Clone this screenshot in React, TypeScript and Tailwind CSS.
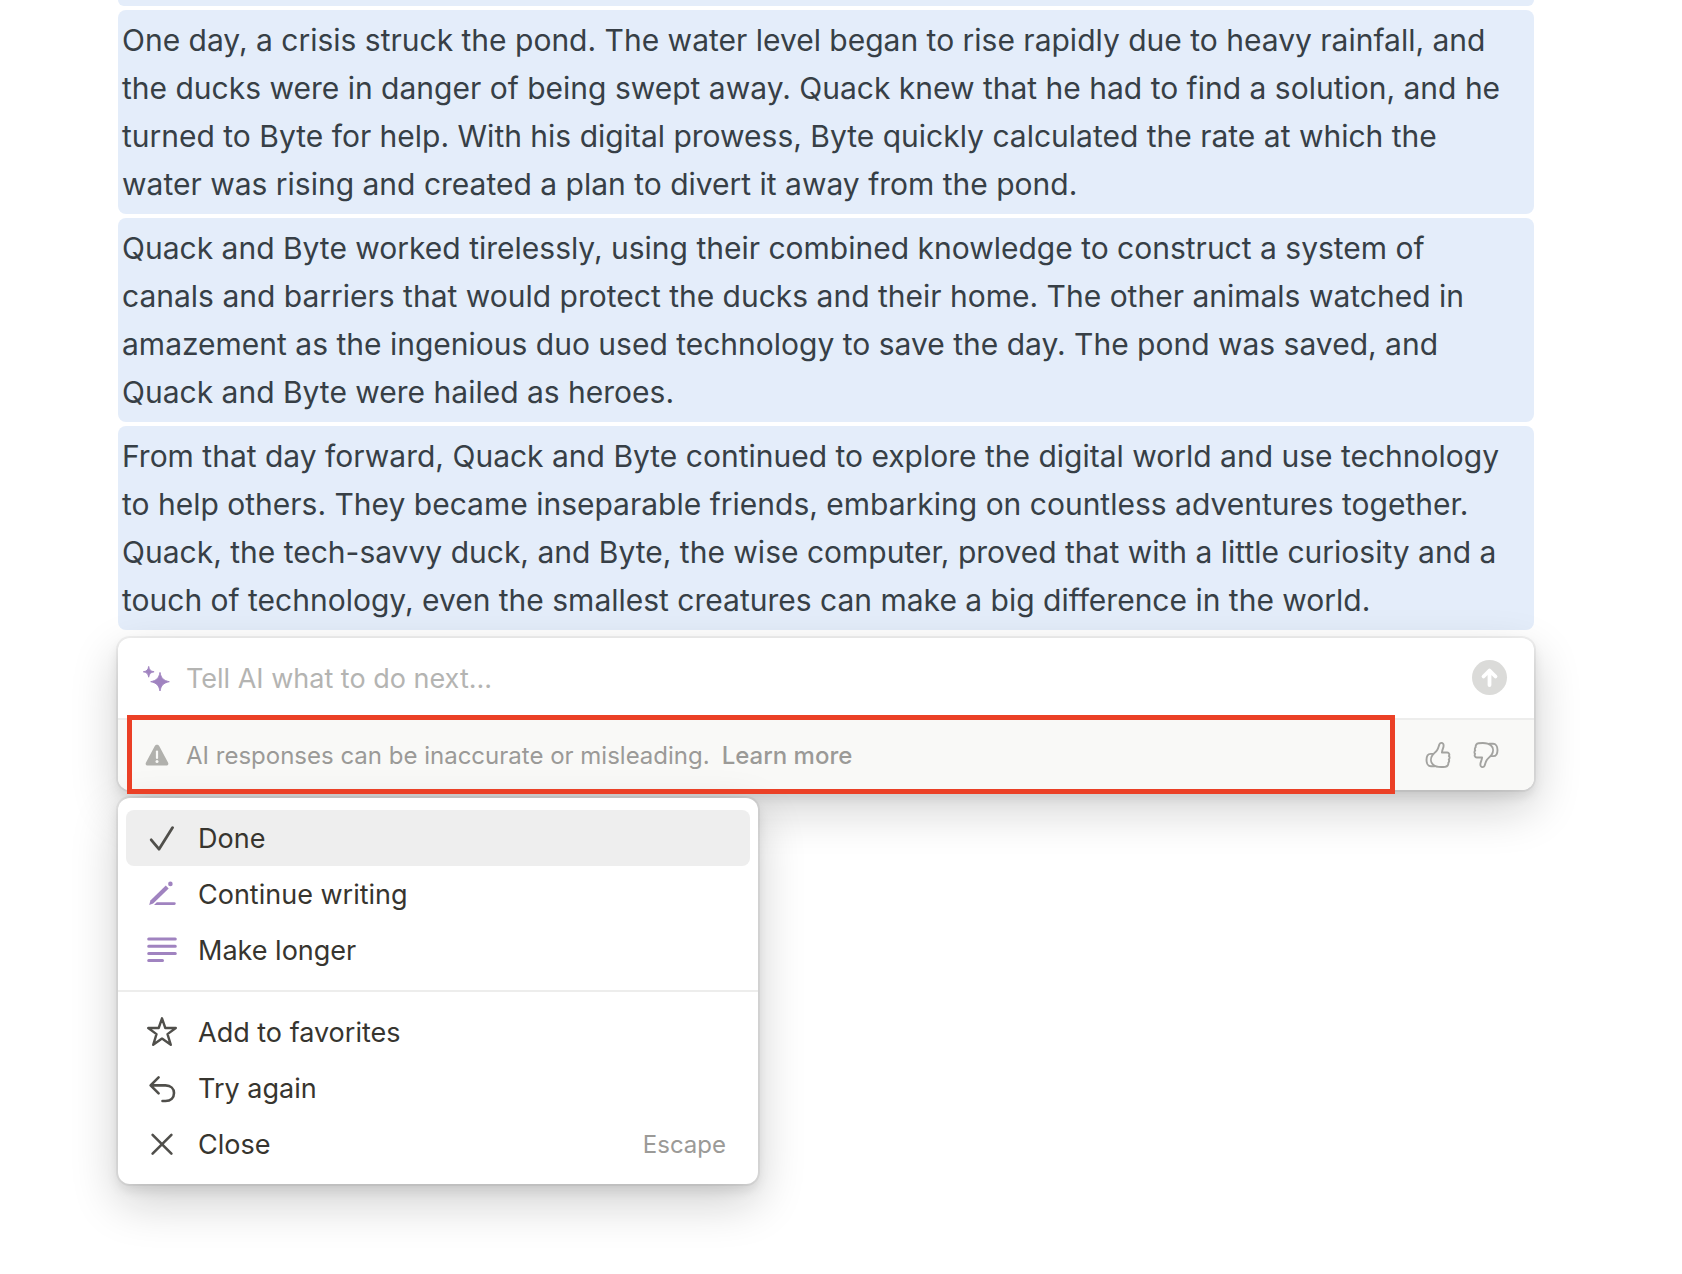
import type { ReactNode } from 'react';

const paragraphs = [
  'One day, a crisis struck the pond. The water level began to rise rapidly due to heavy rainfall, and the ducks were in danger of being swept away. Quack knew that he had to find a solution, and he turned to Byte for help. With his digital prowess, Byte quickly calculated the rate at which the\nwater was rising and created a plan to divert it away from the pond.',
  'Quack and Byte worked tirelessly, using their combined knowledge to construct a system of\ncanals and barriers that would protect the ducks and their home. The other animals watched in amazement as the ingenious duo used technology to save the day. The pond was saved, and Quack and Byte were hailed as heroes.',
  'From that day forward, Quack and Byte continued to explore the digital world and use technology to help others. They became inseparable friends, embarking on countless adventures together. Quack, the tech-savvy duck, and Byte, the wise computer, proved that with a little curiosity and a touch of technology, even the smallest creatures can make a big difference in the world.',
];

const Sparkles = () => (
  <svg
    viewBox="0 0 28 28"
    className="size-7 shrink-0 fill-[#a083c0] stroke-[#a083c0]"
    strokeWidth="0.900"
    strokeLinejoin="round"
    aria-hidden="true"
  >
    <path d="M6.700 2.400C7.400 6 8.500 7.100 12.100 7.800C8.500 8.500 7.400 9.600 6.700 13.200C6 9.600 4.900 8.500 1.300 7.800C4.900 7.100 6 6 6.700 2.400Z" />
    <path d="M18 8.400C19.200 14.100 21.200 16.300 27.300 17.700C21.200 19.100 19.200 21.300 18 27C16.800 21.300 14.800 19.100 8.700 17.700C14.800 16.300 16.800 14.100 18 8.400Z" />
  </svg>
);

const Warning = () => (
  <svg viewBox="0 0 28 28" className="size-7 shrink-0" aria-hidden="true">
    <path d="M14 3.800c1 0 1.700.5 2.200 1.300l8.800 16.300c.9 1.700.1 3.200-1.700 3.200H4.700c-1.800 0-2.600-1.500-1.700-3.200l8.800-16.300c.5-.8 1.200-1.300 2.200-1.300z" fill="#b1b1ad" />
    <path d="M14 10.500v6.500" stroke="#f9f9f7" strokeWidth="2.200" strokeLinecap="round" />
    <circle cx="14" cy="20.600" r="1.500" fill="#f9f9f7" />
  </svg>
);

const Thumb = ({ down = false }: { down?: boolean }) => (
  <svg
    viewBox="0 0 28 28"
    className={down ? 'size-7 rotate-180' : 'size-7'}
    fill="none"
    stroke="#a3a3a0"
    strokeWidth="1.900"
    strokeLinecap="round"
    strokeLinejoin="round"
    aria-hidden="true"
  >
    <path d="M8.200 14.600C9.300 12.700 11.700 11.200 13.200 8.900C14.600 6.800 14.800 4.700 15.500 3.200C16.300 1.500 18.200 1.500 19.100 2.700C20 4 19.600 5.900 18.900 7.700C18.400 9 18 10.200 17.900 11.500H23.300C25.100 11.500 25.900 13.700 24.900 15C25.800 16 25.800 17.600 24.800 18.500C25.400 19.700 25 21.100 24.300 21.800C24.600 23.800 23.500 25.400 21.400 25.700C16.400 26.300 11.600 25.900 9.200 23.700C6.400 21.300 6.500 17.300 8.200 14.600Z" />
    <path d="M8.800 12.900H6.700C4 12.900 2.500 15.700 2.500 19.100C2.500 22.500 4.300 25.200 6.900 25.200H10.500" />
  </svg>
);

const Check = () => (
  <svg viewBox="0 0 32 32" className="size-8" fill="none" stroke="#504f4b" strokeWidth="2.800" strokeLinecap="round" strokeLinejoin="round" aria-hidden="true">
    <path d="M5.200 17.800L13 27.200L26.600 5.600" />
  </svg>
);

const Pencil = () => (
  <svg viewBox="0 0 32 32" className="size-8" fill="#a083c0" aria-hidden="true">
    <path d="M3.200 27L4.400 22.600L19.800 7.500L22.700 10.400L7.200 25.400Z" />
    <circle cx="24.400" cy="5.900" r="2.300" />
    <path d="M10.800 24.200H28.400a1.300 1.300 0 0 1 0 2.700H8Z" />
  </svg>
);

const Lines = () => (
  <svg viewBox="0 0 32 32" className="size-8" stroke="#a083c0" strokeWidth="3" strokeLinecap="round" aria-hidden="true">
    <path d="M2.700 5H29.300M2.700 12.200H29.300M2.700 19.400H29.300M2.700 26.600H16.500" />
  </svg>
);

const Star = () => (
  <svg viewBox="0 0 32 32" className="size-8" fill="none" stroke="#504f4b" strokeWidth="2.400" strokeLinejoin="round" aria-hidden="true">
    <path d="M16 2.300L19.300 12H29.800L21.500 18.100L24.800 28.800L16 22.600L7.200 28.800L10.500 18.100L2.200 12H12.700Z" />
  </svg>
);

const Undo = () => (
  <svg viewBox="0 0 32 32" className="size-8" fill="none" stroke="#504f4b" strokeWidth="2.600" strokeLinecap="round" strokeLinejoin="round" aria-hidden="true">
    <path d="M12.600 5.400L4.600 13.400L12.600 21.400M5 13.400H19.500C24.800 13.400 28 16.700 28 21C28 25.600 24.800 29 19.500 29H16.500" />
  </svg>
);

const Cross = () => (
  <svg viewBox="0 0 32 32" className="size-8" fill="none" stroke="#504f4b" strokeWidth="2.600" strokeLinecap="round" aria-hidden="true">
    <path d="M6.600 6.800L25.400 25.600M25.400 6.800L6.600 25.600" />
  </svg>
);

const MenuItem = ({ icon, label, hint, active = false }: { icon: ReactNode; label: string; hint?: string; active?: boolean }) => (
  <button
    type="button"
    role="menuitem"
    className={`flex h-14 w-full items-center gap-5 rounded-lg pr-6 pl-5 text-left text-[27px] text-[#37352f] ${active ? 'bg-[#eeeeee]' : ''}`}
  >
    {icon}
    <span className="grow pt-0.5">{label}</span>
    {hint && <kbd className="pt-0.5 font-['Inter',sans-serif] text-2xl text-[#9b9a97]">{hint}</kbd>}
  </button>
);

export default function App() {
  return (
    <main className="min-h-screen overflow-hidden bg-white pr-[148px] pb-20 pl-[118px] font-['Inter',sans-serif]">
      <div className="-mt-1.5 h-3 rounded-lg bg-[#e4edfa]" />
      <article className="mt-1 flex flex-col gap-1">
        {paragraphs.map((text) => (
          <p key={text} className="rounded-lg bg-[#e4edfa] px-1 py-1.5 text-[30px] leading-[48px] whitespace-pre-line text-[#373f46]">
            {text}
          </p>
        ))}
      </article>

      <section className="relative mt-2 rounded-xl bg-white shadow-[0_0_0_2px_rgba(15,15,15,0.05),0_6px_12px_rgba(15,15,15,0.1),0_18px_48px_rgba(15,15,15,0.2)]">
        <form className="flex h-20 items-center gap-4 pr-[26px] pl-6" onSubmit={(e) => e.preventDefault()}>
          <Sparkles />
          <input
            type="text"
            aria-label="Tell AI what to do next"
            placeholder="Tell AI what to do next..."
            className="min-w-0 grow pt-0.5 text-[27px] text-[#37352f] outline-none placeholder:text-[#b4b4b2]"
          />
          <button type="submit" aria-label="Send" className="size-9 shrink-0">
            <svg viewBox="0 0 36 36" className="size-9" aria-hidden="true">
              <circle cx="17.500" cy="17.500" r="17.500" fill="#dbdbd9" />
              <path d="M17.500 25V11M11.500 16.500L17.500 10.500L23.500 16.500" fill="none" stroke="#fff" strokeWidth="3.800" strokeLinecap="round" strokeLinejoin="round" />
            </svg>
          </button>
        </form>
        <footer className="flex h-[72px] items-center rounded-b-xl border-t-2 border-[#ededec] bg-[#f9f9f7] pr-[34px] pl-[25px] text-2xl text-[#9b9a97]">
          <Warning />
          <p className="ml-[15px] grow pt-0.5">
            AI responses can be inaccurate or misleading.
            <a href="#learn-more" className="ml-3 font-medium">Learn more</a>
          </p>
          <div className="flex gap-5">
            <button type="button" aria-label="Good response"><Thumb /></button>
            <button type="button" aria-label="Bad response"><Thumb down /></button>
          </div>
        </footer>
        <div className="pointer-events-none absolute right-[139px] -bottom-1 left-[9px] z-10 h-[79px] border-5 border-[#eb4026]" />
      </section>

      <div role="menu" className="relative mt-2 w-[640px] rounded-xl bg-white shadow-[0_0_0_2px_rgba(15,15,15,0.05),0_6px_12px_rgba(15,15,15,0.1),0_18px_48px_rgba(15,15,15,0.2)]">
        <div className="px-2 py-3">
          <MenuItem icon={<Check />} label="Done" active />
          <MenuItem icon={<Pencil />} label="Continue writing" />
          <MenuItem icon={<Lines />} label="Make longer" />
        </div>
        <div className="border-t-2 border-[#ededec] px-2 py-3">
          <MenuItem icon={<Star />} label="Add to favorites" />
          <MenuItem icon={<Undo />} label="Try again" />
          <MenuItem icon={<Cross />} label="Close" hint="Escape" />
        </div>
      </div>
    </main>
  );
}
